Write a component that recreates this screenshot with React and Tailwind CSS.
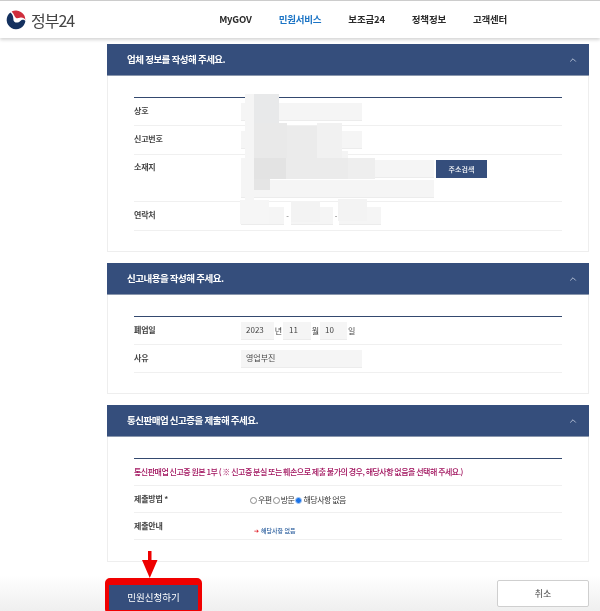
import { ChevronUp } from 'lucide-react';

const NAV_ITEMS = [
    { label: 'MyGOV', className: 'text-[#2b2b2b]' },
    { label: '민원서비스', className: 'text-[#1b74c5]' },
    { label: '보조금24', className: 'text-[#2b2b2b]' },
    { label: '정책정보', className: 'text-[#2b2b2b]' },
    { label: '고객센터', className: 'text-[#2b2b2b]' },
];

// masked out areas of the form
const BLOTCHES = [
    'left-[245px] top-[94px] w-[9px] h-[106px] bg-[#f5f5f5]',
    'left-[254px] top-[94px] w-[25px] h-[29px] bg-[#e8e9ea]',
    'left-[254px] top-[123px] w-[33px] h-[35px] bg-[#e9e9e9]',
    'left-[287px] top-[126px] w-[30px] h-[32px] bg-[#ebebeb]',
    'left-[317px] top-[123px] w-[25px] h-[37px] bg-[#f1f1f1]',
    'left-[342px] top-[151px] w-[6px] h-[8px] bg-[#f4f4f4]',
    'left-[241px] top-[158px] w-[13px] h-[39px] bg-[#f5f5f5]',
    'left-[254px] top-[158px] w-[32px] h-[21px] bg-[#e3e3e3]',
    'left-[286px] top-[158px] w-[62px] h-[21px] bg-[#ebebeb]',
    'left-[348px] top-[158px] w-[27px] h-[21px] bg-[#eeeeee]',
    'left-[254px] top-[179px] w-[16px] h-[11px] bg-[#e5e5e5]',
    'left-[240px] top-[200px] w-[29px] h-[24px] bg-[#f6f6f6]',
    'left-[291px] top-[201px] w-[29px] h-[21px] bg-[#f3f3f3]',
    'left-[338px] top-[199px] w-[29px] h-[22px] bg-[#f3f3f3]',
];

function Logo() {
    return (
        <div className="flex items-center gap-[5px]">
            <svg width="20" height="20" viewBox="0 0 20 20">
                <path d="M5.6 1.6A9.4 9.4 0 0 1 19.4 10C18.8 8.4 16.8 7.4 14.6 7.6 13 7.8 12 8.6 10.6 8.2 8.4 7.4 8 3.8 5.6 1.6Z" fill="#cf2e3c" />
                <path d="M4.4 2.4A9.4 9.4 0 1 0 19.4 11C18.6 9.8 17 9.4 15.6 10 14.2 10.6 13.6 12.4 11.4 12.6 9 12.8 7.4 11.2 7.4 9.4 7.4 7 6.8 4.2 4.4 2.4Z" fill="#14315f" />
            </svg>
            <span className="text-[16px] leading-none tracking-[-1px] text-[#444]">정부24</span>
        </div>
    );
}

function Field({ className = '', children }) {
    return (
        <div className={`h-[18px] bg-[#f5f5f5] border-b border-[#ececec] flex items-center text-[8px] text-[#444] pl-[5px] ${className}`}>
            {children}
        </div>
    );
}

function Row({ label, className = 'items-center', labelClass = '-mt-[2px]', children }) {
    return (
        <div className={`flex border-b border-[#f0f0f0] ${className}`}>
            <div className={`w-[107px] shrink-0 text-[8px] font-bold tracking-[-0.2px] text-[#444] ${labelClass}`}>{label}</div>
            {children}
        </div>
    );
}

function Section({ title, children }) {
    return (
        <section>
            <div className="h-[32px] bg-[#354e7c] border-b border-[#8a97ad] flex items-center justify-between pl-[20px] pr-[11px]">
                <h2 className="text-[9.5px] font-bold tracking-[-0.5px] text-white">{title}</h2>
                <ChevronUp size={10} strokeWidth={1.75} className="text-[#dbe2ee]" />
            </div>
            <div className="border border-t-0 border-[#eeeeee] px-[26px] pt-[21px]">
                <div className="border-t border-[#34496f]">{children}</div>
            </div>
        </section>
    );
}

function Radio({ checked, label }) {
    return (
        <label className="flex items-center">
            <span className={`w-[7px] h-[7px] rounded-full border ${checked ? 'border-[#a9c8f2] bg-[#1a73e8]' : 'border-[#8a8a8a] bg-white'}`} />
            <span className="ml-[1px]">{label}</span>
        </label>
    );
}

export default function App() {
    return (
        <div className="relative w-[600px] h-[611px] overflow-hidden bg-white blur-[0.3px] font-['Noto_Sans_CJK_KR','Noto_Sans',sans-serif]">
            {/* Header */}
            <header className="relative z-10 h-[38px] border-t border-[#cccccc] bg-white shadow-[0_2px_3px_rgba(0,0,0,0.16)] flex items-center pl-[6px]">
                <Logo />
                <nav className="flex items-center gap-[27px] ml-[145px]">
                    {NAV_ITEMS.map((item) => (
                        <a key={item.label} className={`text-[9.5px] font-bold tracking-[-0.2px] ${item.className}`}>{item.label}</a>
                    ))}
                </nav>
            </header>

            <main className="pl-[107px] pr-[11px] pt-[6px] flex flex-col gap-[11px]">
                <Section title="업체 정보를 작성해 주세요.">
                    <Row label="상호" className="items-center h-[28px]">
                        <Field className="w-[121px]" />
                    </Row>
                    <Row label="신고번호" className="items-center h-[29px]">
                        <Field className="w-[121px]" />
                    </Row>
                    <Row label="소재지" className="items-start h-[47px] pt-[5px]" labelClass="mt-[1px]">
                        <div className="flex flex-col gap-[2px]">
                            <div className="flex gap-[2px]">
                                <Field className="w-[193px]" />
                                <button className="w-[51px] h-[18px] bg-[#354e7c] text-[7px] font-medium text-white">주소검색</button>
                            </div>
                            <Field className="w-[193px]" />
                        </div>
                    </Row>
                    <Row label="연락처" className="items-center h-[29px]">
                        <div className="flex items-center text-[7.5px] text-[#666]">
                            <Field className="w-[43px]" />
                            <span className="w-[7px] text-center">-</span>
                            <Field className="w-[42px]" />
                            <span className="w-[6px] text-center">-</span>
                            <Field className="w-[42px]" />
                        </div>
                    </Row>
                    <div className="h-[20px]" />
                </Section>

                <Section title="신고내용을 작성해 주세요.">
                    <Row label="폐업일" className="items-center h-[28px]">
                        <div className="flex items-center text-[8px] text-[#444]">
                            <Field className="w-[33px]">2023</Field>
                            <span className="w-[8px] text-right">년</span>
                            <Field className="w-[28px] ml-[1px] pl-[6px]">11</Field>
                            <span className="w-[9px] text-center">월</span>
                            <Field className="w-[27px]">10</Field>
                            <span className="ml-[1px]">일</span>
                        </div>
                    </Row>
                    <Row label="사유" className="items-center h-[28px]">
                        <Field className="w-[121px]">영업부진</Field>
                    </Row>
                    <div className="h-[20px]" />
                </Section>

                <Section title="통신판매업 신고증을 제출해 주세요.">
                    <div className="h-[27px] border-b border-[#f0f0f0] flex items-center text-[8px] font-medium tracking-[-0.5px] text-[#a0105c]">
                        통신판매업 신고증 원본 1부 ( ※ 신고증 분실 또는 훼손으로 제출 불가의 경우, 해당사항 없음을 선택해 주세요.)
                    </div>
                    <Row label="제출방법 *" className="items-center h-[27px]" labelClass="">
                        <div className="ml-[9px] mt-[2px] flex items-center gap-[1px] text-[8px] tracking-[-0.5px] text-[#333]">
                            <Radio label="우편" />
                            <Radio label="방문" />
                            <Radio checked label="해당사항 없음" />
                        </div>
                    </Row>
                    <Row label="제출안내" className="items-center h-[27px]" labelClass="">
                        <div className="ml-[13px] mt-[9px] flex items-center gap-[2px] text-[6px] font-medium text-[#2c5f9e]">
                            <span className="text-[#e0202a]">➔</span>
                            <span>해당사항 없음</span>
                        </div>
                    </Row>
                    <div className="h-[21px]" />
                </Section>
            </main>

            {/* Bottom bar */}
            <div className="absolute inset-x-0 bottom-0 h-[36px] bg-gradient-to-b from-white to-[#efefef] flex items-start justify-between pl-[105px] pr-[11px] pt-[3px]">
                <div className="border-[4px] border-[#f00000] rounded-[5px] bg-[#f00000]">
                    <button className="w-[89px] h-[25px] bg-[#354e7c] text-[9.5px] text-white">민원신청하기</button>
                </div>
                <button className="w-[92px] h-[27px] mt-[2px] bg-white border border-[#cfcfcf] rounded-[2px] text-[9px] text-[#444]">취소</button>
            </div>

            {/* Red arrow pointing at the submit button */}
            <svg className="absolute left-[141px] top-[550px]" width="18" height="30" viewBox="0 0 18 30">
                <path d="M7 1H10.5V10H16.5L8.75 28 1 10H7Z" fill="#ee0000" />
            </svg>

            {BLOTCHES.map((cls) => (
                <div key={cls} className={`absolute ${cls}`} />
            ))}
        </div>
    );
}
